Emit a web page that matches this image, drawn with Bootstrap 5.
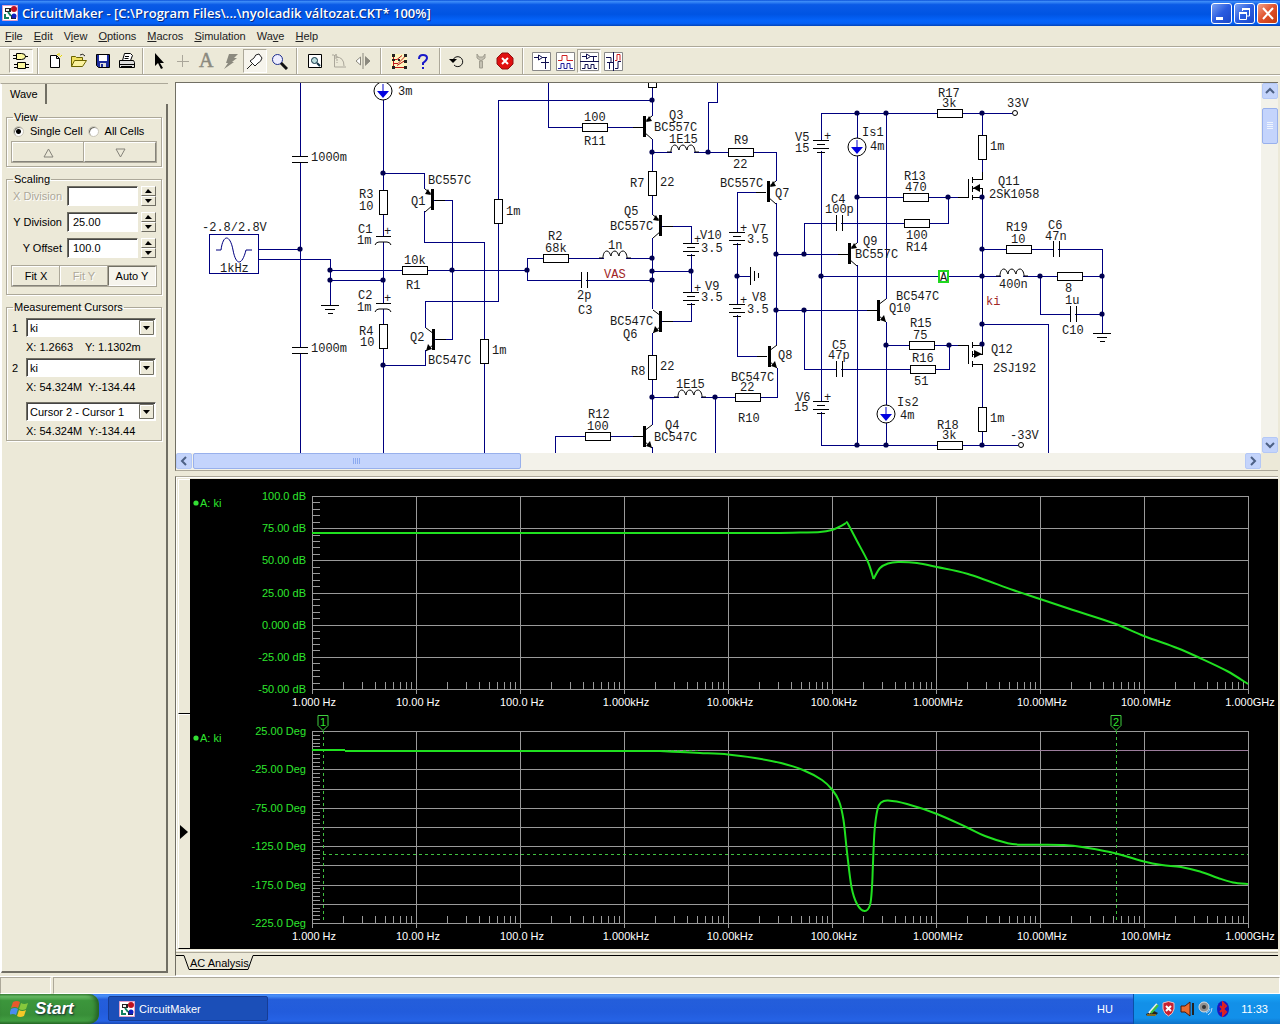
<!DOCTYPE html>
<html lang="hu">
<head>
<meta charset="utf-8">
<meta name="viewport" content="width=device-width, initial-scale=1">
<title>CircuitMaker</title>
<link rel="stylesheet" href="https://cdn.jsdelivr.net/npm/bootstrap@5.3.0/dist/css/bootstrap.min.css">
<style>
:root{--face:#ece9d8;--shade:#aca899;--dark:#716f64}
body{font-family:"Liberation Sans",Arial,sans-serif;font-size:11px;line-height:14px;color:#000;background:var(--face)}
.titlebar{height:26px;background:linear-gradient(#0a50d8 0,#3d8cf8 6%,#0a5ae6 18%,#0054e3 55%,#0564fb 80%,#0560f4 90%,#0344b8 100%);color:#fff;font-family:"Open Sans","Noto Sans",sans-serif;font-weight:600;font-size:13px;text-shadow:1px 1px 0 #0a2a80;padding:0 2px}
.winbtns{gap:2px}
.winbtn{width:21px;height:21px;border:1px solid #fff;border-radius:3px;background:linear-gradient(135deg,#7ba2f2,#2a5ce0 50%,#1c48c8);padding:0;line-height:0}
.winbtn.winclose{background:linear-gradient(135deg,#f0a088,#e0502a 50%,#c03a10)}
.menubar{height:21px;padding:0 5px;border-bottom:1px solid var(--shade)}
.menubar a{color:#222;text-decoration:none;margin-right:11px}
.toolbar{height:28px;border-top:1px solid #fff;border-bottom:1px solid var(--shade);padding-left:9px}
.tool{width:24px;height:24px;border:1px solid transparent;background:none;padding:0;display:flex;align-items:center;justify-content:center}
.tool.pressed{border-color:var(--shade) #fff #fff var(--shade);background:#f6f4ec}
.tool svg{flex:none}
.toolsep{width:12px;height:26px;display:flex;justify-content:center}
.toolsep::before{content:"";border-left:1px solid var(--shade);border-right:1px solid #fff}
.toolsep.s8{width:8px}.toolsep.s10{width:10px}
.workarea{min-height:0;border-top:1px solid #fff}
.sidepanel{width:168px;margin:7px 7px 3px 0;border-top:1px solid var(--shade);border-left:1px solid #fff}
.wavetab{width:46px;height:20px;padding-left:8px;border-right:2px solid var(--dark);border-left:1px solid #fff}
.wavepage{border-right:2px solid var(--dark);border-bottom:2px solid var(--dark);border-left:1px solid #fff;padding:6px 4px 0 4px}
.grp{border:1px solid var(--shade);box-shadow:1px 1px 0 #fff,inset 1px 1px 0 #fff;padding:0 5px;margin-bottom:5px}
.grp legend{float:none;width:auto;font-size:11px;line-height:14px;margin:0 0 0 1px;padding:0 1px}
.grp.view{height:57px}.grp.scale{height:123px}.grp.meas{height:141px}
.rad{appearance:none;width:11px;height:11px;border-radius:50%;background:#fff;border:1px solid #c9c6b8;margin:0 6px 0 1px;box-shadow:inset 1px 1px 0 #716f64}
.rad:checked{background:radial-gradient(circle,#000 0 2px,#fff 3px)}
.flatbtn{border:1px solid;border-color:#fff #85837a #85837a #fff;outline:1px solid var(--shade);outline-offset:0;background:var(--face);height:20px;padding:0;font-size:11px;line-height:14px;color:#000;flex:1}
.flatbtn:disabled{color:var(--shade);text-shadow:1px 1px 0 #fff}
.flatbtn.down{background:#f6f4ec;border-color:#716f64 #fff #fff #716f64}
.num{width:71px;height:20px;border:1px solid;border-color:#716f64 #fff #fff #716f64;box-shadow:inset 1px 1px 0 #444;background:#fff;padding:0 5px;font-size:11px;margin-left:5px;border-radius:0}
.lab{width:50px;text-align:right;white-space:nowrap}
.lab.off{color:var(--shade);text-shadow:1px 1px 0 #fff}
.rows{gap:6px}
.spin{width:15px;height:20px;margin-left:3px}
.spin button{flex:1;border:1px solid;border-color:#fff #716f64 #716f64 #fff;background:var(--face);padding:0;line-height:0;display:flex;align-items:center;justify-content:center}
.num-key{width:14px}
.combo{position:relative;width:130px;height:19px}
.combo.inset{margin-left:14px}
.combo select{appearance:none;width:100%;height:100%;border:1px solid;border-color:#716f64 #fff #fff #716f64;box-shadow:inset 1px 1px 0 #444;background:#fff;font-size:11px;line-height:14px;padding:0 3px;border-radius:0;color:#000}
.combo svg{position:absolute;right:2px;top:2px;pointer-events:none}
.readout{height:21px;line-height:20px;padding-left:14px;white-space:pre}
.sheet{margin:6px 2px 0 0;border-top:1px solid var(--dark);border-left:1px solid var(--dark);border-bottom:1px solid var(--shade);background:#fff}
.sheet svg.drawing{display:block;flex:none}
.vbar{width:17px;background:#f3f2ea}
.hbar{height:17px;background:#f3f2ea}
.sbtn{width:16px;height:16px;border:1px solid #b4c8f6;border-radius:2px;background:#c4d4fb;padding:0;line-height:0;flex:none}
.thumb{border:1px solid #98b0ec;border-radius:2px;background:#c4d4fc;display:flex;align-items:center;justify-content:center}
.thumb.v{width:16px;height:36px;margin-top:9px}.thumb.h{width:328px;height:16px;margin-left:1px}
.corner{width:17px;background:var(--face)}
.wavebox{border-top:1px solid var(--shade);border-left:1px solid var(--dark);margin:5px 2px 0 0;box-shadow:inset 1px 1px 0 #fff}
.strip{width:14px;padding:2px 0 0 2px}
.strip div{border:1px solid #fff;border-bottom:1px solid #000;border-right:0;flex:1;display:flex;align-items:center}
.plots{background:#000;margin-top:2px;height:470px;overflow:hidden}
.tabstrip{border-left:1px solid var(--dark);border-bottom:1px solid #fff}
.tabstrip svg{display:block}
.statusbar{height:18px;border-top:1px solid #fff;gap:2px}
.pane{border:1px solid;border-color:var(--shade) #fff #fff var(--shade)}
.pane.narrow{width:51px}
.taskbar{height:30px;background:linear-gradient(#3a7ff0 0,#4a90f8 6%,#245edb 18%,#225cdc 60%,#2663e6 90%,#1a48b0 100%);color:#fff}
.start{width:99px;border:0;padding:0 0 0 10px;background:linear-gradient(#4aa048 0,#6cc068 8%,#3c963c 22%,#388e38 70%,#43a043 90%,#2a702a 100%);border-radius:0 10px 10px 0;box-shadow:inset -3px 0 4px #256025;color:#fff;font:italic 700 17px/20px "Liberation Sans",sans-serif;text-shadow:1px 1px 2px #123}
.task{width:160px;height:25px;margin:2px 0 0 9px;border:1px solid #163c94;border-radius:2px;background:#1b4fb8;color:#fff;font-size:11px;padding:0 10px;text-align:left}
.lang{margin-right:20px}
.tray{width:147px;background:linear-gradient(#2aa8f8 0,#18a0f4 10%,#1290e8 30%,#1290ea 80%,#0e72c8 100%);border-left:1px solid #0a50a8;padding:0 12px 0 10px}
.wire{stroke:#000080;fill:none;shape-rendering:crispEdges}
.part{stroke:#000;fill:none}
.sheet text{font:12px "Liberation Mono","Courier New",monospace;fill:#1a1a1a}
.sheet text.net{fill:#a02424}
.plots text{font:11px "Liberation Sans",Arial,sans-serif;fill:#fff}
.plots text.axis{fill:#2ee62e}
</style>
<script src="https://cdn.jsdelivr.net/npm/bootstrap@5.3.0/dist/js/bootstrap.bundle.min.js"></script>
</head>
<body class="d-flex flex-column vh-100 overflow-hidden">

<svg width="0" height="0" class="position-absolute" aria-hidden="true">
<defs>
<g id="app"><path fill="#fff" stroke="#e0a0c8" d="M.5.5h15v15H.5z"/><path d="M3 3h6v4H3zM9 10h5v4H9z" fill="#222"/><path d="M4 4h3v2H4z" fill="#eee"/><circle cx="12" cy="4" r="3" fill="#c01020"/><circle cx="12" cy="11" r="2.5" fill="#1020c0"/><path d="M3 9v4h4M6 7l3 4" stroke="#118060" stroke-width="2" fill="none"/></g>
<g id="res" class="part" shape-rendering="crispEdges"><rect x="0" y="-4" width="25" height="8" fill="#fff"/></g>
<g id="resv" class="part" shape-rendering="crispEdges"><rect x="-4" y="0" width="8" height="24" fill="#fff"/></g>
<g id="capv" class="part" shape-rendering="crispEdges"><path stroke="#fff" stroke-width="3" d="M0 1v5"/><path d="M-8 0H8M-8 6H8"/></g>
<g id="caph" class="part" shape-rendering="crispEdges"><path stroke="#fff" stroke-width="3" d="M1 0h4"/><path d="M0-8V8M6-8V8"/></g>
<g id="ecap" class="part"><path stroke="#fff" stroke-width="3" d="M0 1v5"/><path shape-rendering="crispEdges" d="M-7 0H8"/><path d="M-8 9q1-3 4-3h8q3 0 4 3"/></g>
<g id="batt" class="part" shape-rendering="crispEdges"><path stroke="#fff" stroke-width="3" d="M0 1v10"/><path d="M-8 0H8M-4 4H4M-8 8H8M-4 12H4"/></g>
<g id="coil" class="part"><path stroke="#fff" stroke-width="3" d="M1 0h22"/><path d="M-4 0H0C0-5 2-7 4-7S7-4 8-2C8-5 10-7 12-7S15-4 16-2C16-5 18-7 20-7S24-4 24 0h4"/></g>
<g id="gnd" class="part" shape-rendering="crispEdges"><path d="M-9 0H9M-5 4H5M-2 8H3"/></g>
<!-- transistors: origin at the middle of the base bar, leads to the right -->
<g id="pnp"><path class="part" d="M8-11L0-5M0 5l8 7"/><path d="M-1-11h3v21h-3z"/><path d="M2-5l3-6 3 5z"/></g>
<g id="npn"><path class="part" d="M8-11L0-5M0 5l8 7"/><path d="M-1-10h3v21h-3z"/><path d="M8 12l-6-2 4-5z"/></g>
<g id="isrc"><circle r="9" fill="#fff" stroke="#000"/><path stroke="#0000c8" d="M0-7V2"/><path fill="#0000e0" d="M-6 0H6L0 7z"/></g>
<g id="drop"><path fill="#ece9d8" stroke="#716f64" d="M.5.5h14v14H.5z"/><path stroke="#fff" d="M1 1.5h13M1.5 1v13"/><path d="M4 6h7l-3.5 4z"/></g>
</defs>
</svg>

<header class="titlebar d-flex align-items-center flex-shrink-0">
  <svg width="16" height="16" class="me-1"><use href="#app"/></svg>
  <span class="flex-grow-1">CircuitMaker - [C:\Program Files\...\nyolcadik változat.CKT* 100%]</span>
  <div class="winbtns d-flex flex-shrink-0">
    <button class="winbtn" aria-label="Minimize"><svg width="19" height="19"><path fill="#fff" d="M4 13h7v3H4z"/></svg></button>
    <button class="winbtn" aria-label="Restore"><svg width="19" height="19" fill="none" stroke="#fff"><path stroke-width="2" d="M7 5h8M4 9h8"/><path d="M7.5 4v3M14.5 4v8H12M4.5 8v7.5h7V8"/></svg></button>
    <button class="winbtn winclose" aria-label="Close"><svg width="19" height="19"><path stroke="#fff" stroke-width="2" d="M5 4l10 11M15 4L5 15"/></svg></button>
  </div>
</header>

<nav class="menubar d-flex align-items-center flex-shrink-0">
  <a href="#"><u>F</u>ile</a><a href="#"><u>E</u>dit</a><a href="#">V<u>i</u>ew</a><a href="#"><u>O</u>ptions</a><a href="#"><u>M</u>acros</a><a href="#"><u>S</u>imulation</a><a href="#">Wa<u>v</u>e</a><a href="#"><u>H</u>elp</a>
</nav>

<div class="toolbar d-flex align-items-center flex-shrink-0">
  <button class="tool pressed" aria-label="Parts"><svg width="16" height="18" fill="#fdf9a0" stroke="#000"><path d="M3.5 1.5h5q4 0 4 3t-4 3h-5zM0 3.5h3M0 6.5h3M12 4.5h3M4.5 10.5h8v6h-8zM1 12.5h3M1 15.5h3M13 12.5h3M13 15.5h3"/></svg></button>
  <span class="toolsep s10"></span>
  <button class="tool" aria-label="New"><svg width="16" height="16"><path fill="#fff" stroke="#000" d="M3.5 2.5h6l3 3v9h-9zM9.5 2.5v3h3"/><path stroke="#e8d800" d="M12 0v3M15 2l-2 2M10 1l1 1"/></svg></button>
  <button class="tool" aria-label="Open"><svg width="18" height="16"><path fill="#f0e060" stroke="#6b6400" d="M1.5 13.5v-10h4l1 1h6v3"/><path fill="#fbf3a0" stroke="#6b6400" d="M1.5 13.5l3-6h12l-4 6z"/><path fill="none" stroke="#222" d="M10 2q3-2 5 1"/></svg></button>
  <button class="tool" aria-label="Save"><svg width="15" height="15"><path fill="#1c2c9c" stroke="#000" d="M.5.5h13v13h-11l-2-2z"/><path fill="#fff" d="M3 1h8v6H3z"/><path fill="#ddd" d="M4 9h6v4H4z"/><path fill="#1c2c9c" d="M5 10h2v3H5z"/></svg></button>
  <button class="tool" aria-label="Print"><svg width="18" height="18" stroke="#000"><path fill="#fff" d="M4.5 8.5l2-7h6l2 2-2 5M7 4.5h4M6.5 6.5h4"/><path fill="#ddd" d="M1.5 8.5h14l1 2v5h-15z"/><path d="M2 12.5h14M3 14.5h11"/></svg></button>
  <span class="toolsep s8"></span>
  <button class="tool" aria-label="Select"><svg width="12" height="16"><path d="M2 0v13l3-3 3 6 2-1-3-5h4z"/></svg></button>
  <button class="tool" aria-label="Wire"><svg width="14" height="14"><path stroke="#aaa69a" d="M1 7.5h12M6.5 1v12"/></svg></button>
  <button class="tool" aria-label="Text"><svg width="18" height="24"><text x="1" y="18" font-family="Liberation Serif,serif" font-size="20" fill="#8b897e" stroke="#8b897e" stroke-width=".5">A</text></svg></button>
  <button class="tool" aria-label="Delete"><svg width="16" height="16"><path fill="#8b897e" d="M6 1h9l-4 4h3l-5 4h2L1 16l4-6H3z"/></svg></button>
  <button class="tool pressed" aria-label="Probe"><svg width="18" height="18" fill="#fff" stroke="#222"><path d="M1 17l5-5M4 9l5 5 3-3q3-1 4-5l-3-4q-4 0-5 4z"/></svg></button>
  <button class="tool" aria-label="Zoom"><svg width="17" height="17"><circle cx="6.5" cy="6.5" r="5" fill="#eef" stroke="#1c2c8c"/><path stroke="#111" stroke-width="3" d="M10 10l6 6"/></svg></button>
  <span class="toolsep"></span>
  <button class="tool" aria-label="Fit"><svg width="16" height="16"><path fill="#fff" stroke="#000" d="M1.5 1.5h13v13h-13z"/><circle cx="7.5" cy="7.5" r="3" fill="#bdd" stroke="#134"/><path stroke="#134" stroke-width="2" d="M10 10l3 3"/></svg></button>
  <button class="tool" aria-label="Rotate"><svg width="16" height="16" fill="none" stroke="#aaa69a"><path d="M3.5 2v12H15M5 4q8 0 8 9M5 1v5"/><path stroke-dasharray="2 1" d="M1 2h5v8"/></svg></button>
  <button class="tool" aria-label="Mirror"><svg width="16" height="16"><path fill="#fff" stroke="#8b897e" d="M5.5 4v8L1 8zM10.5 4v8L15 8zM8 0v16"/><path fill="#8b897e" d="M10 3v10l5-5z"/></svg></button>
  <span class="toolsep"></span>
  <button class="tool" aria-label="Run"><svg width="17" height="17"><path fill="#fdf6c0" d="M0 1h16v15H0z"/><path fill="none" stroke="#c01818" d="M2.500 2v12.500H15M3 6.500h3l5-4M3 10.500h4l7-7M6 12.500l8-5"/><path fill="#222" d="M1 1h3v3H1zM13 1h3v3h-3zM13 7h3v3h-3zM1 13h3v3H1zM13 13h3v3h-3zM1 6h3v2H1zM7 6h2v2H7z"/></svg></button>
  <button class="tool" aria-label="Help"><svg width="12" height="17"><path fill="none" stroke="#1818c8" stroke-width="2" d="M2 6q0-4 4-4t4 3q0 2-4 5v2M6 14v2"/></svg></button>
  <span class="toolsep s10"></span>
  <button class="tool" aria-label="Reset"><svg width="17" height="16"><path fill="none" stroke="#111" d="M4 7a5 5 0 1 1 1 5"/><path d="M0 6h8l-4 4z"/></svg></button>
  <button class="tool" aria-label="Step"><svg width="12" height="16"><path fill="#c4c1b2" stroke="#a19e90" d="M2 1v4l4 3 4-3V1L8 4H4zM4.5 8h3v7h-3z"/></svg></button>
  <button class="tool" aria-label="Stop"><svg width="18" height="18"><path fill="#e01010" stroke="#901010" d="M6 1h6l5 5v6l-5 5H6l-5-5V6z"/><path stroke="#fff" stroke-width="2" d="M6 6l6 6M12 6l-6 6"/></svg></button>
  <span class="toolsep"></span>
  <button class="tool" aria-label="Schematic view"><svg width="19" height="19" fill="none" stroke="#101050"><path fill="#fff" stroke="#888" d="M.5.5h18v18H.5z"/><path d="M2 5.5h4M6.5 3v5l4-2.5zM10 5.5h5M9 10.5h8M13.5 6v4M13.5 11v6"/></svg></button>
  <button class="tool" aria-label="Wave view"><svg width="19" height="19" fill="none"><path fill="#fff" stroke="#888" d="M.5.5h18v18H.5z"/><path stroke="#d02020" d="M2 8.5h4v-5h5v5h6"/><path stroke="#2020a0" d="M2 16.5h3v-5h3v5h3v-5h3v5h3"/></svg></button>
  <button class="tool pressed" aria-label="Split view"><svg width="19" height="19" fill="none"><path fill="#fff" stroke="#888" d="M.5.5h18v18H.5z"/><path stroke="#101050" d="M0 9.5h19M2 4.5h4M6.5 2v5l4-2.5zM10 4.5h7M13.5 5v4M2 16.5h3v-4h3v4h3v-4h3v4h3"/></svg></button>
  <button class="tool" aria-label="Side view"><svg width="19" height="19" fill="none"><path fill="#fff" stroke="#888" d="M.5.5h18v18H.5z"/><path stroke="#101050" d="M9.5 0v19M2 5.5h5v5M3 10.5h6M5.5 11v6M11 16.5h3v-7h3"/><path stroke="#d02020" d="M11 8.5h2v-6h3v6"/></svg></button>
</div>

<main class="workarea d-flex flex-grow-1">
  <aside class="sidepanel d-flex flex-column flex-shrink-0">
    <div class="wavetab d-flex align-items-center">Wave</div>
    <div class="wavepage flex-grow-1">
      <fieldset class="grp view"><legend>View</legend>
        <div class="d-flex align-items-center">
          <input class="rad" type="radio" name="cells" id="one" checked><label for="one" class="me-1">Single Cell</label>
          <input class="rad" type="radio" name="cells" id="all"><label for="all">All Cells</label>
        </div>
        <div class="d-flex mt-1">
          <button class="flatbtn" aria-label="Up"><svg width="11" height="10" fill="none" stroke="#85837a"><path d="M5.5 1L10 9H1z"/></svg></button>
          <button class="flatbtn" aria-label="Down"><svg width="11" height="10" fill="none" stroke="#85837a"><path d="M5.5 9L10 1H1z"/></svg></button>
        </div>
      </fieldset>
      <fieldset class="grp scale"><legend>Scaling</legend>
        <div class="rows d-flex flex-column">
          <div class="d-flex align-items-center"><label class="lab off" for="xd">X Division</label><input class="num" id="xd" disabled><span class="spin d-flex flex-column"><button aria-label="X up"><svg width="7" height="4"><path d="M0 4l3-4 4 4z"/></svg></button><button aria-label="X down"><svg width="7" height="4"><path d="M0 0h7L3 4z"/></svg></button></span></div>
          <div class="d-flex align-items-center"><label class="lab" for="yd">Y Division</label><input class="num" id="yd" value="25.00"><span class="spin d-flex flex-column"><button aria-label="Y up"><svg width="7" height="4"><path d="M0 4l3-4 4 4z"/></svg></button><button aria-label="Y down"><svg width="7" height="4"><path d="M0 0h7L3 4z"/></svg></button></span></div>
          <div class="d-flex align-items-center"><label class="lab" for="yo">Y Offset</label><input class="num" id="yo" value="100.0"><span class="spin d-flex flex-column"><button aria-label="Offset up"><svg width="7" height="4"><path d="M0 4l3-4 4 4z"/></svg></button><button aria-label="Offset down"><svg width="7" height="4"><path d="M0 0h7L3 4z"/></svg></button></span></div>
        </div>
        <div class="d-flex mt-2"><button class="flatbtn">Fit X</button><button class="flatbtn" disabled>Fit Y</button><button class="flatbtn down">Auto Y</button></div>
      </fieldset>
      <fieldset class="grp meas"><legend>Measurement Cursors</legend>
        <div class="d-flex align-items-center mt-1"><label for="c1" class="num-key">1</label><div class="combo"><select id="c1"><option>ki</option></select><svg width="15" height="15"><use href="#drop"/></svg></div></div>
        <div class="readout">X: 1.2663    Y: 1.1302m</div>
        <div class="d-flex align-items-center"><label for="c2" class="num-key">2</label><div class="combo"><select id="c2"><option>ki</option></select><svg width="15" height="15"><use href="#drop"/></svg></div></div>
        <div class="readout mb-1">X: 54.324M  Y:-134.44</div>
        <div class="combo inset"><select aria-label="Difference"><option>Cursor 2 - Cursor 1</option></select><svg width="15" height="15"><use href="#drop"/></svg></div>
        <div class="readout">X: 54.324M  Y:-134.44</div>
      </fieldset>
    </div>
  </aside>

  <section class="d-flex flex-column flex-grow-1 overflow-hidden">
    <div class="sheet flex-shrink-0">
      <div class="d-flex">
        <div class="flex-grow-1 overflow-hidden">
        <svg class="drawing" width="1085" height="370" viewBox="176 83 1085 370">
          <path class="wire" d="M300 83V453M258 249H300M258 259H330V305M330 270H527M330 280H383M383 99V453M383 173H424V189M424 211V242H484V453M434 200H452V339H435M425 328V301H498V100H652M425 350V365H383
          M548 83V127H643M652 83V116M652 139V215M652 238V309M652 333V425M652 447V453M555 453V436H643M652 152H776V181M708 152V102H717V83M662 226H691V321H662M652 271H691M527 258H652M527 258V280H652M776 203V345M766 192H737V356H767M737 276H750M777 368V397H652M715 397V453
          M776 254H848M804 254V223H948V197M857 197H968M857 113V243M857 265V445M821 113H1012M821 113V445H1018M886 113V299M886 322V445M776 310H877M804 310V369H949V345M886 345H968M821 276H1102M982 113V180M982 197V345M982 364V445M982 249H1102V333M1040 276V314H1102M982 324H1048V453"/>
          <g>
            <use href="#res" x="402" y="270"/><use href="#res" x="582" y="127"/><use href="#res" x="585" y="436"/><use href="#res" x="728" y="152"/><use href="#res" x="543" y="258"/><use href="#res" x="735" y="397"/><use href="#res" x="937" y="113"/><use href="#res" x="937" y="445"/><use href="#res" x="903" y="197"/><use href="#res" x="904" y="223"/><use href="#res" x="909" y="345"/><use href="#res" x="910" y="369"/><use href="#res" x="1006" y="249"/><use href="#res" x="1057" y="276"/>
            <use href="#resv" x="383" y="190"/><use href="#resv" x="383" y="324"/><use href="#resv" x="498" y="199"/><use href="#resv" x="484" y="339"/><use href="#resv" x="652" y="63"/><use href="#resv" x="652" y="171"/><use href="#resv" x="652" y="355"/><use href="#resv" x="982" y="135"/><use href="#resv" x="982" y="407"/>
            <use href="#capv" x="300" y="156"/><use href="#capv" x="300" y="347"/><use href="#ecap" x="383" y="236"/><use href="#ecap" x="383" y="303"/>
            <use href="#caph" x="581" y="280"/><use href="#caph" x="836" y="223"/><use href="#caph" x="836" y="369"/><use href="#caph" x="1053" y="249"/><use href="#caph" x="1070" y="314"/>
            <use href="#batt" x="691" y="243"/><use href="#batt" x="691" y="292"/><use href="#batt" x="737" y="232"/><use href="#batt" x="737" y="304"/><use href="#batt" x="821" y="140"/><use href="#batt" x="821" y="401"/>
            <use href="#coil" x="671" y="152"/><use href="#coil" x="603" y="258"/><use href="#coil" x="678" y="397"/><use href="#coil" x="1000" y="276"/>
            <use href="#gnd" x="330" y="305"/><use href="#gnd" x="1102" y="333"/><use href="#gnd" transform="translate(750 276) rotate(-90)"/>
            <use href="#pnp" x="644" y="127"/><use href="#pnp" x="768" y="192"/><use href="#pnp" x="849" y="254"/>
            <use href="#npn" x="644" y="436"/><use href="#npn" x="769" y="356"/><use href="#npn" x="878" y="310"/>
            <use href="#pnp" transform="translate(433 200) scale(-1 1)"/><use href="#pnp" transform="translate(661 226) scale(-1 1)"/>
            <use href="#npn" transform="translate(434 339) scale(-1 1)"/><use href="#npn" transform="translate(661 321) scale(-1 1)"/>
            <use href="#isrc" x="383" y="91"/><use href="#isrc" x="857" y="147"/><use href="#isrc" x="886" y="414"/>
          </g>
          <path class="part" shape-rendering="crispEdges" d="M958 197H968V179M972 177V183M972 186V192M972 195V200M972 179H982V172M972 188H982V197H972M958 345H968V364M972 342V348M972 351V357M972 361V367M972 345H982M972 354H982V345M972 364H982V370M435 200H445M436 339H446M633 127H643M633 436H643M663 226H673M663 321H673M756 192H766M757 356H767M838 254H848M867 310H877"/>
          <path d="M973 188l7-4v8zM982 354l-8-4v8z"/>
          <path class="part" d="M216 250H221C223 234 230 234 233 250S242 266 246 250H252" style="stroke:#000080"/>
          <path class="wire" d="M209 234H258V273H209z"/>
          <circle cx="1015" cy="113" r="2.5" fill="#fff" stroke="#000"/><circle cx="1021" cy="445" r="2.5" fill="#fff" stroke="#000"/>
          <g id="dots" fill="#000050"></g>
          <rect x="939" y="271" width="9" height="11" fill="#fff" stroke="#20d820" stroke-width="2"/>
          <g id="labels"></g>
        </svg>
        </div>
        <div class="vbar d-flex flex-column align-items-center">
          <button class="sbtn" aria-label="Scroll up"><svg width="14" height="14"><path fill="none" stroke="#4d6185" stroke-width="2" d="M3 9l4-4 4 4"/></svg></button>
          <div class="thumb v"><svg width="8" height="8"><path stroke="#eef4fe" d="M1 .5h6M1 2.5h6M1 4.5h6M1 6.5h6"/></svg></div>
          <button class="sbtn mt-auto" aria-label="Scroll down"><svg width="14" height="14"><path fill="none" stroke="#4d6185" stroke-width="2" d="M3 5l4 4 4-4"/></svg></button>
        </div>
      </div>
      <div class="d-flex">
        <div class="hbar d-flex flex-grow-1">
          <button class="sbtn" aria-label="Scroll left"><svg width="14" height="14"><path fill="none" stroke="#4d6185" stroke-width="2" d="M9 3L5 7l4 4"/></svg></button>
          <div class="thumb h"><svg width="8" height="8"><path stroke="#8caaf0" d="M.5 1v6M2.5 1v6M4.5 1v6M6.5 1v6"/></svg></div>
          <button class="sbtn ms-auto" aria-label="Scroll right"><svg width="14" height="14"><path fill="none" stroke="#4d6185" stroke-width="2" d="M5 3l4 4-4 4"/></svg></button>
        </div>
        <div class="corner"></div>
      </div>
    </div>

    <div class="wavebox d-flex flex-shrink-0">
      <div class="strip d-flex flex-column"><div></div><div><svg width="10" height="16"><path d="M1 1v14l8-7z"/></svg></div></div>
      <div class="plots flex-grow-1"><svg id="plot" width="1087" height="470" viewBox="190 479 1087 470"></svg></div>
    </div>
    <div class="tabstrip flex-grow-1 overflow-hidden"><svg width="1102" height="22" viewBox="176 949 1102 22"><path stroke="#fff" d="M176 950.5H1278"/><path stroke="#aca899" d="M176 952.5H1278"/><path fill="none" stroke="#000" d="M176 955.5H184L189 969.5H248L253 955.5H1278"/><text x="190" y="967" font-size="11">AC Analysis</text></svg></div>
  </section>
</main>

<footer class="flex-shrink-0">
  <div class="statusbar d-flex"><div class="pane narrow"></div><div class="pane flex-grow-1"></div></div>
  <div class="taskbar d-flex">
    <button class="start d-flex align-items-center"><svg width="21" height="18" class="me-1"><path fill="#e8582c" d="M3 2q4-2 7 0L8 8q-3-2-7 0z"/><path fill="#86c83c" d="M11 3q3 2 7 0l-2 6q-4 2-7 0z"/><path fill="#4a8cf0" d="M1 9q4-2 7 0l-2 6q-3-2-7 0z"/><path fill="#f4c828" d="M9 10q3 2 7 0l-2 6q-4 2-7 0z"/></svg>Start</button>
    <button class="task d-flex align-items-center"><svg width="16" height="16" class="me-1"><use href="#app"/></svg>CircuitMaker</button>
    <span class="lang ms-auto align-self-center">HU</span>
    <div class="tray d-flex align-items-center">
      <svg width="90" height="18">
        <path fill="#222" d="M2 14l8-3 4 2-3 3H3z"/><path stroke="#f0f0f0" stroke-width="2" d="M5 13l8-9"/><path stroke="#40c040" stroke-width="2" d="M7 13l7-8"/><path stroke="#e0b020" d="M3 15h9"/>
        <path fill="#c82030" stroke="#f0c0c0" d="M19 3l5.5-1.5L30 3v6q-1 5-5.5 7Q20 14 19 9z"/><path stroke="#fff" stroke-width="2" d="M22 6l5 5M27 6l-5 5"/>
        <path fill="#e86c30" stroke="#501808" d="M37 6h4l5-4v14l-5-4h-4z"/><path stroke="#222" stroke-width="2" d="M49 3v12"/>
        <circle cx="60" cy="7" r="5" fill="#909090" stroke="#ddd"/><circle cx="60" cy="7" r="2" fill="#333"/><path fill="none" stroke="#b8d8f8" d="M64 15q4-2 4-7M62 13q3-1 4-4"/>
        <ellipse cx="79" cy="9" rx="6" ry="8" fill="#1818c0"/><path fill="none" stroke="#e02020" stroke-width="2" d="M76 6l6 6-3 3V3l3 3-6 6"/>
      </svg>
      <span class="ms-auto">11:33</span>
    </div>
  </div>
</footer>

<script>
const NS = 'http://www.w3.org/2000/svg';
function add(parent, tag, attrs, text) {
  const e = document.createElementNS(NS, tag);
  for (const k in attrs) e.setAttribute(k, attrs[k]);
  if (text !== undefined) e.textContent = text;
  parent.appendChild(e);
  return e;
}

/* junction dots */
const dots = document.getElementById('dots');
[[300,249],[330,270],[330,280],[383,280],[452,270],[527,270],[383,173],[383,365],[652,100],[652,152],[708,152],
 [652,258],[652,271],[652,280],[691,271],[652,397],[715,397],[737,276],[776,254],[776,310],[804,254],[804,310],
 [821,276],[857,113],[857,197],[857,445],[886,113],[886,345],[886,445],[948,197],[949,345],[982,113],[982,197],
 [982,249],[982,276],[982,324],[982,344],[982,445],[1040,276],[1102,276],[1102,314]]
 .forEach(p => add(dots, 'circle', {cx: p[0], cy: p[1], r: 2.6}));

/* part names and values: text, x, middle y */
const labels = document.getElementById('labels');
[['3m',398,91],['1000m',311,157],['BC557C',428,180],['R3',359,194],['10',359,206],['C1',358,229],['1m',357,240],['+',384,231],
 ['Q1',411,201],['-2.8/2.8V',202,227],['1kHz',220,268],['10k',404,260],['R1',406,285],['C2',358,295],['1m',357,307],['+',384,298],
 ['R4',359,331],['10',360,342],['Q2',410,337],['BC547C',428,360],['1m',506,211],['1m',492,350],['1000m',311,348],
 ['100',584,117],['R11',584,141],['Q3',669,115],['BC557C',654,127],['1E15',669,139],['R9',734,140],['22',733,164],['R7',630,183],
 ['22',660,182],['BC557C',720,183],['Q7',775,193],['Q5',624,211],['BC557C',610,226],['V10',700,235],['3.5',701,248],['V7',752,229],
 ['3.5',747,239],['+',694,239],['+',740,228],['R2',548,236],['68k',545,248],['1n',608,245],['VAS',604,274,'net'],['2p',577,295],
 ['C3',578,310],['V9',705,286],['3.5',701,297],['+',694,288],['V8',752,297],['3.5',747,309],['+',740,300],['BC547C',610,321],
 ['Q6',623,334],['R8',631,371],['22',660,366],['Q8',778,355],['BC547C',731,377],['22',740,387],['1E15',676,384],['R10',738,418],
 ['R12',588,414],['100',587,426],['Q4',665,425],['BC547C',654,437],['V5',795,137],['15',795,148],['+',824,136],['Is1',862,132],
 ['4m',870,146],['R17',938,93],['3k',942,103],['33V',1007,103],['1m',990,146],['R13',904,176],['470',905,187],['Q11',998,181],
 ['2SK1058',989,194],['C4',831,199],['100p',825,209],['R14',906,247],['100',906,235],['Q9',863,241],['BC557C',855,254],
 ['R19',1006,227],['10',1011,239],['C6',1048,225],['47n',1045,236],['400n',999,284],['A',940,277],['BC547C',896,296],['Q10',889,308],
 ['ki',986,301,'net'],['R15',910,323],['75',913,335],['C5',832,345],['47p',828,355],['R16',912,358],['51',914,381],['Q12',991,349],
 ['2SJ192',993,368],['Is2',897,402],['4m',900,415],['V6',796,397],['15',794,407],['+',824,397],['R18',937,425],['3k',942,435],
 ['-33V',1010,435],['1m',990,418],['8',1065,288],['1u',1065,300],['C10',1062,330]]
 .forEach(t => add(labels, 'text', {x: t[1], y: t[2] + 4, class: t[3] || 'part-name'}, t[0]));

/* Bode plots */
const plot = document.getElementById('plot');
const X0 = 312, DEC = 104;
const units = ['1.000 Hz','10.00 Hz','100.0 Hz','1.000kHz','10.00kHz','100.0kHz','1.000MHz','10.00MHz','100.0MHz','1.000GHz'];
function grid(top, bottom, rows, names, every) {
  let d = '';
  const r = (bottom - top) / rows;
  for (let i = 0; i <= rows; i++) {
    const y = Math.round(top + i * r);
    d += `M${X0} ${y}H${X0 + 9 * DEC}`;
    if (i < rows) for (let k = 1; k < 5; k++) d += `M${X0} ${Math.round(top + (i + k / 5) * r)}h8`;
  }
  for (let i = 0; i < 10; i++) {
    const x = X0 + i * DEC;
    d += `M${x} ${top}V${bottom + 5}`;
    if (i < 9) for (let k = 2; k < 10; k++) d += `M${Math.round(x + Math.log10(k) * DEC)} ${bottom}v-7`;
    add(plot, 'text', {x: x + 2, y: bottom + 17, 'text-anchor': 'middle'}, units[i]);
  }
  add(plot, 'path', {d, stroke: '#9a9a9a', 'shape-rendering': 'crispEdges'});
  names.forEach((n, i) => add(plot, 'text', {x: 306, y: Math.round(top + i * every * r) + 4, 'text-anchor': 'end', class: 'axis'}, n));
  add(plot, 'circle', {cx: 196, cy: top + 7, r: 2.6, fill: '#34e034'});
  add(plot, 'text', {x: 200, y: top + 11, class: 'axis'}, 'A: ki');
}
grid(496, 689, 6, ['100.0 dB','75.00 dB','50.00 dB','25.00 dB','0.000 dB','-25.00 dB','-50.00 dB'], 1);
grid(731, 923, 10, ['25.00 Deg','-25.00 Deg','-75.00 Deg','-125.0 Deg','-175.0 Deg','-225.0 Deg'], 2);

/* cursors */
add(plot, 'path', {d: 'M312 750H1248', stroke: '#9c7c9c', 'shape-rendering': 'crispEdges'});
add(plot, 'path', {d: 'M323 731V923M1116 731V923M323 854H1248M323 750H700', stroke: '#40c040', 'stroke-dasharray': '3 3', 'shape-rendering': 'crispEdges'});
[[323, '1'], [1116, '2']].forEach(c => {
  add(plot, 'path', {d: `M${c[0] - 5} 715.5h10v10l-5 5-5-5z`, fill: '#000', stroke: '#40d040'});
  add(plot, 'text', {x: c[0], y: 726, 'text-anchor': 'middle', class: 'axis'}, c[1]);
});

/* smooth curve through sample points */
function curve(p) {
  let d = `M${p[0]}`;
  for (let i = 0; i < p.length - 1; i++) {
    const a = p[i - 1] || p[i], b = p[i], c = p[i + 1], e = p[i + 2] || c;
    d += `C${b[0] + (c[0] - a[0]) / 6} ${b[1] + (c[1] - a[1]) / 6} ${c[0] - (e[0] - b[0]) / 6} ${c[1] - (e[1] - b[1]) / 6} ${c[0]} ${c[1]}`;
  }
  add(plot, 'path', {d, fill: 'none', stroke: '#20e020', 'stroke-width': 2});
}
curve([[312,533],[780,533]]);
curve([[780,533],[800,532.5],[820,532],[832,530],[839,527],[846,523]]);
curve([[846,522],[848,524],[857,541],[868,562],[873.5,579]]);
curve([[873.5,579],[880,568],[888,563.5],[898,562],[917,563],[937,567],[968,574],[1013,590],[1040,599],[1073,610],[1113,623],[1144,636],[1177,648],[1200,658],[1227,671],[1248,684]]);
curve([[312,750],[345,750]]);
curve([[345,751],[660,751]]);
curve([[660,751],[680,752],[700,753],[728,754.5],[755,758],[781,763],[803,770],[822,780],[832,789.5],[839,801],[843.5,820],[847,852],[851.5,887],[857,904],[864.5,911],[870,905],[872,887],[873,863],[874.6,830],[877.6,809],[881,802.5],[888,800.5],[907,804],[937,814],[966,827],[985,836],[1007,843],[1022,844.7],[1064,845],[1088,848],[1116,853.5],[1144,861.5],[1162,865],[1181,867],[1200,871.5],[1218,878],[1233,882.5],[1248,884]]);
</script>
</body>
</html>
